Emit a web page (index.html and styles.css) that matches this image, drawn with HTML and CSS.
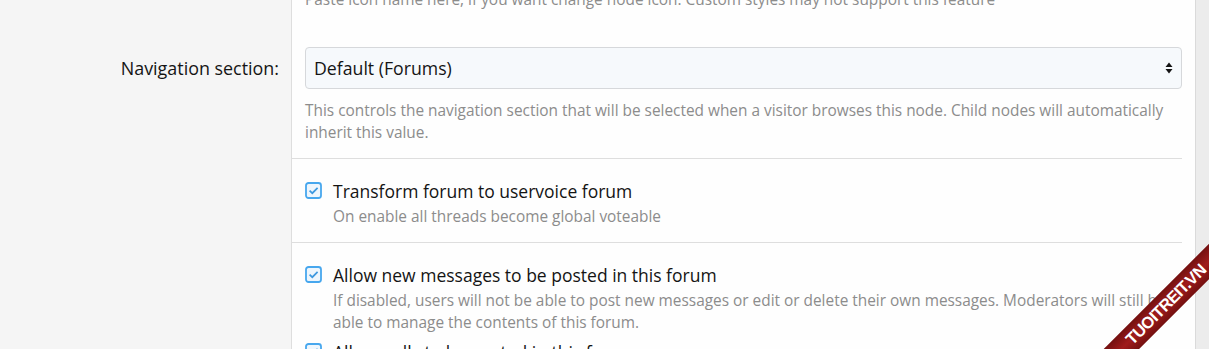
FILE: index.html
```html
<!DOCTYPE html>
<html>
  <head>
    <meta charset="UTF-8">
    <title>Forum options</title>
    <link rel="stylesheet" href="styles.css">
  </head>
  <body>
    <div class="block">
      <div class="form">

        <div class="form-row row-icon">
          <div class="row-label"></div>
          <div class="row-body">
            <div class="explain">Paste icon name here, if you want change node icon. Custom styles may not support this feature</div>
          </div>
        </div>

        <div class="form-row row-nav">
          <div class="row-label">
            <label for="nav-section">Navigation section:</label>
          </div>
          <div class="row-body">
            <div class="select-wrap">
              <select id="nav-section" class="input">
                <option>Default (Forums)</option>
              </select>
              <svg class="select-arrows" width="8" height="12" viewBox="0 0 8 12">
                <path d="M4 0.5 L7.5 5 L0.5 5 Z M0.5 7 L7.5 7 L4 11.5 Z" fill="#141414"/>
              </svg>
            </div>
            <div class="explain">This controls the navigation section that will be selected when a visitor browses this node. Child nodes will automatically inherit this value.</div>
          </div>
        </div>

        <div class="form-row row-group">
          <div class="row-label"></div>
          <div class="row-body">
            <div class="group">
              <ul class="choices">
                <li class="choice">
                  <div class="choice-main">
                    <svg class="check" width="17" height="17" viewBox="0 0 17 17">
                      <rect x="1" y="1" width="15" height="15" rx="2.5" fill="#eef6fd" stroke="#47a7ee" stroke-width="1.8"/>
                      <path d="M4.6 8.6 L7.3 11.2 L12.6 5.8" fill="none" stroke="#3d98df" stroke-width="1.7"/>
                    </svg>
                    <span class="choice-text">Transform forum to uservoice forum</span>
                  </div>
                  <div class="choice-hint">On enable all threads become global voteable</div>
                </li>
              </ul>
            </div>
          </div>
        </div>

        <div class="form-row row-group">
          <div class="row-label"></div>
          <div class="row-body">
            <div class="group">
              <ul class="choices">
                <li class="choice">
                  <div class="choice-main">
                    <svg class="check" width="17" height="17" viewBox="0 0 17 17">
                      <rect x="1" y="1" width="15" height="15" rx="2.5" fill="#eef6fd" stroke="#47a7ee" stroke-width="1.8"/>
                      <path d="M4.6 8.6 L7.3 11.2 L12.6 5.8" fill="none" stroke="#3d98df" stroke-width="1.7"/>
                    </svg>
                    <span class="choice-text">Allow new messages to be posted in this forum</span>
                  </div>
                  <div class="choice-hint">If disabled, users will not be able to post new messages or edit or delete their own messages. Moderators will still be able to manage the contents of this forum.</div>
                </li>
                <li class="choice">
                  <div class="choice-main">
                    <svg class="check" width="17" height="17" viewBox="0 0 17 17">
                      <rect x="1" y="1" width="15" height="15" rx="2.5" fill="#eef6fd" stroke="#47a7ee" stroke-width="1.8"/>
                      <path d="M4.6 8.6 L7.3 11.2 L12.6 5.8" fill="none" stroke="#3d98df" stroke-width="1.7"/>
                    </svg>
                    <span class="choice-text">Allow polls to be posted in this forum</span>
                  </div>
                </li>
              </ul>
            </div>
          </div>
        </div>

      </div>
    </div>

    <div class="watermark">TUOITREIT.VN</div>
  </body>
</html>
```

FILE: styles.css
```css
html, body {
  height: 349px;
  overflow: hidden;
}

body {
  margin: 0;
  background: #ececec;
  font-family: 'Open Sans', 'Noto Sans', sans-serif;
  color: #141414;
}

.block {
  width: 1195px;
  background: #fefefe;
  border-right: 1px solid #dadada;
}

.form {
  margin-top: -11px;
}

.form-row {
  display: flex;
}

.row-label {
  flex: 0 0 279px;
  padding-right: 12px;
  background: #f5f5f5;
  border-right: 1px solid #dedede;
  text-align: right;
  font-size: 17.9px;
}

.row-body {
  flex: 1;
  min-width: 0;
  padding: 0 13px 0 13px;
}

.explain {
  font-size: 15.4px;
  line-height: 22px;
  color: #8c8c8c;
}

.row-icon .row-body {
  padding-bottom: 18px;
}

.row-nav .row-label {
  padding-top: 18px;
  line-height: 42px;
}

.row-nav .row-body {
  padding-top: 18px;
  padding-bottom: 14px;
}

.row-nav .explain {
  margin-top: 11px;
}

.select-wrap {
  position: relative;
}

.input {
  display: block;
  width: 100%;
  height: 42px;
  margin: 0;
  padding: 0 30px 0 8px;
  border: 1px solid #d6d8db;
  border-radius: 4px;
  background: #f6f9fc;
  font-family: inherit;
  font-size: 17.7px;
  color: #141414;
  -webkit-appearance: none;
  appearance: none;
}

.select-arrows {
  position: absolute;
  right: 9px;
  top: 15px;
}

.row-group .row-body {
  padding-left: 0;
}

.group {
  border-top: 1px solid #dedede;
  padding: 19px 0 14px 13px;
}

.choices {
  list-style: none;
  margin: 0;
  padding: 0;
}

.choice + .choice {
  margin-top: 5px;
}

.choice-main {
  display: flex;
  align-items: flex-start;
  gap: 11px;
  font-size: 17.5px;
  line-height: 26px;
}

.check {
  flex: none;
  margin-top: 4px;
}

.choice-hint {
  padding-top: 2px;
  padding-left: 28px;
  font-size: 15.4px;
  line-height: 22px;
  color: #8c8c8c;
}

.watermark {
  position: absolute;
  left: 1066px;
  top: 292px;
  width: 200px;
  height: 25px;
  line-height: 25px;
  transform: rotate(-45deg);
  background: linear-gradient(#741010, #a01c1c 50%, #741010);
  color: #fff;
  font-family: 'Liberation Sans', Arial, sans-serif;
  font-weight: bold;
  font-size: 16.5px;
  letter-spacing: -0.6px;
  text-align: center;
}
```
